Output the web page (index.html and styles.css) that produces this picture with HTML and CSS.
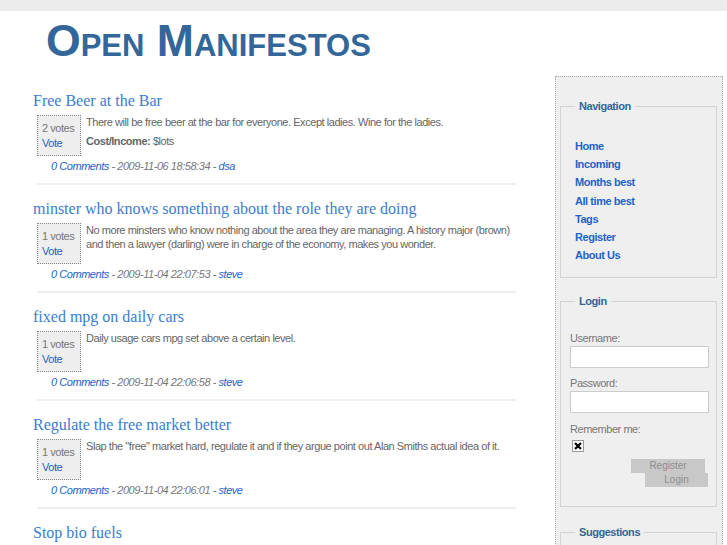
FILE: index.html
```html
<!DOCTYPE html>
<html>
<head>
<meta charset="utf-8">
<title>Open Manifestos</title>
<link rel="stylesheet" href="styles.css">
</head>
<body>
<div class="topbar"></div>
<header class="header">
  <h1 class="logo">Open Manifestos</h1>
</header>
<div class="layout">
  <main class="main">
    <div class="post">
      <h2 class="post-title"><a href="#">Free Beer at the Bar</a></h2>
      <div class="post-row">
        <div class="votebox"><div class="votes">2 votes</div><a href="#" class="vote">Vote</a></div>
        <div class="post-body">
          <p>There will be free beer at the bar for everyone. Except ladies. Wine for the ladies.</p>
          <p class="cost"><b>Cost/Income:</b> $lots</p>
        </div>
      </div>
      <div class="meta"><a href="#">0 Comments</a> - 2009-11-06 18:58:34 - <a href="#">dsa</a></div>
    </div>
    <div class="post">
      <h2 class="post-title"><a href="#">minster who knows something about the role they are doing</a></h2>
      <div class="post-row">
        <div class="votebox"><div class="votes">1 votes</div><a href="#" class="vote">Vote</a></div>
        <div class="post-body">
          <p>No more minsters who know nothing about the area they are managing. A history major (brown) and then a lawyer (darling) were in charge of the economy, makes you wonder.</p>
        </div>
      </div>
      <div class="meta"><a href="#">0 Comments</a> - 2009-11-04 22:07:53 - <a href="#">steve</a></div>
    </div>
    <div class="post">
      <h2 class="post-title"><a href="#">fixed mpg on daily cars</a></h2>
      <div class="post-row">
        <div class="votebox"><div class="votes">1 votes</div><a href="#" class="vote">Vote</a></div>
        <div class="post-body">
          <p>Daily usage cars mpg set above a certain level.</p>
        </div>
      </div>
      <div class="meta"><a href="#">0 Comments</a> - 2009-11-04 22:06:58 - <a href="#">steve</a></div>
    </div>
    <div class="post">
      <h2 class="post-title"><a href="#">Regulate the free market better</a></h2>
      <div class="post-row">
        <div class="votebox"><div class="votes">1 votes</div><a href="#" class="vote">Vote</a></div>
        <div class="post-body">
          <p>Slap the "free" market hard, regulate it and if they argue point out Alan Smiths actual idea of it.</p>
        </div>
      </div>
      <div class="meta"><a href="#">0 Comments</a> - 2009-11-04 22:06:01 - <a href="#">steve</a></div>
    </div>
    <div class="post last">
      <h2 class="post-title"><a href="#">Stop bio fuels</a></h2>
    </div>
  </main>
  <aside class="sidebar">
    <fieldset class="box nav-box">
      <legend>Navigation</legend>
      <nav class="nav">
        <a href="#">Home</a>
        <a href="#">Incoming</a>
        <a href="#">Months best</a>
        <a href="#">All time best</a>
        <a href="#">Tags</a>
        <a href="#">Register</a>
        <a href="#">About Us</a>
      </nav>
    </fieldset>
    <fieldset class="box login-box">
      <legend>Login</legend>
      <div class="field-label first">Username:</div>
      <input class="text-input" type="text">
      <div class="field-label">Password:</div>
      <input class="text-input" type="password">
      <div class="field-label remember">Remember me:</div>
      <span class="check"><svg width="12" height="12" viewBox="0 0 12 12"><rect x="0.5" y="0.5" width="11" height="11" fill="#fff" stroke="#999"/><path d="M3 3 L9 9 M9 3 L3 9" stroke="#000" stroke-width="2.2"/></svg></span>
      <div class="buttons">
        <span class="btn btn-register">Register</span>
        <span class="btn btn-login">Login</span>
      </div>
    </fieldset>
    <fieldset class="box sugg-box">
      <legend>Suggestions</legend>
      <div class="sugg-space"></div>
    </fieldset>
  </aside>
</div>
</body>
</html>
```

FILE: styles.css
```css
html, body {
  margin: 0;
  padding: 0;
  background: #fff;
  overflow: hidden;
}
body {
  font-family: "Liberation Sans", Arial, sans-serif;
  font-size: 11px;
  letter-spacing: -0.45px;
  color: #666;
}
a { text-decoration: none; color: #1f63c6; }

.topbar {
  height: 11px;
  background: #ececec;
}
.header {
  height: 65px;
  padding: 5px 0 0 46px;
  box-sizing: border-box;
}
.logo {
  margin: 0;
  font-size: 44.6px;
  line-height: 50px;
  font-weight: bold;
  font-variant: small-caps;
  color: #336699;
  letter-spacing: 0;
}

.layout {
  display: flex;
  align-items: flex-start;
  height: 469px;
  overflow: hidden;
}
.main {
  flex: none;
  width: 484px;
  margin-left: 33px;
  padding-top: 15px;
}
.post { margin-bottom: 14px; }
.post-title {
  margin: 0;
  font-family: "Liberation Serif", "Times New Roman", serif;
  font-weight: normal;
  font-size: 16px;
  line-height: 20px;
  letter-spacing: 0;
}
.post-title a { color: #3a7dcf; }
.post-row {
  display: flex;
  align-items: flex-start;
  margin-top: 4px;
}
.votebox {
  flex: none;
  width: 44px;
  height: 41px;
  margin-left: 4px;
  border: 1px dotted #888;
  background: #eee;
  padding: 5px 0 0 4px;
  box-sizing: border-box;
  line-height: 15px;
}
.votes { color: #777; }
.post-body {
  margin-left: 5px;
  flex: 1;
  line-height: 14px;
}
.post-body p { margin: 0; }
.post-body p.cost { margin-top: 5px; }
.post-body b { color: #666; }
.meta {
  margin: 3px 1px 0 4px;
  padding: 0 0 10px 14px;
  font-style: italic;
  line-height: 14px;
  color: #777;
  border-bottom: 2px solid #eee;
}

.sidebar {
  flex: none;
  margin-left: 38px;
  width: 168px;
  box-sizing: border-box;
  border: 1px dotted #aaa;
  background: #efefef;
  padding: 22px 5px 0 4px;
  height: 600px;
}
.box {
  margin: 0;
  border: 1px solid #d3d3d3;
  padding: 0 14px;
  min-width: 0;
}
.box legend {
  padding: 0 4px;
  font-weight: bold;
  color: #336699;
  line-height: 14px;
}
.nav-box { padding-top: 24px; padding-bottom: 13px; }
.nav a {
  display: block;
  font-weight: bold;
  line-height: 18.2px;
  color: #1f63c6;
}
.login-box {
  margin-top: 16px;
  padding: 23px 6px 19px 9px;
}
.login-box legend { margin-left: 5px; }
.field-label {
  line-height: 14px;
  color: #777;
  margin-top: 8px;
}
.field-label.first { margin-top: 0; }
.field-label.remember { margin-top: 9px; }
.text-input {
  display: block;
  margin: 1px 0 0 0;
  width: 139px;
  height: 22px;
  box-sizing: border-box;
  border: 1px solid #ccc;
  background: #fff;
  padding: 0;
}
.check {
  display: block;
  margin: 4px 0 0 2px;
  height: 12px;
  line-height: 0;
}
.buttons {
  margin-top: 7px;
  display: flex;
  flex-direction: column;
  align-items: flex-end;
}
.btn {
  display: block;
  height: 14px;
  line-height: 14px;
  background: #c8c8c8;
  color: #8e8e8e;
  text-align: center;
  font-size: 10px;
  letter-spacing: 0;
}
.btn-register { width: 74px; margin-right: 5px; }
.btn-login { width: 63px; margin-right: 2px; }
.sugg-box { margin-top: 18px; padding-top: 10px; }
.sugg-space { height: 60px; }
```
